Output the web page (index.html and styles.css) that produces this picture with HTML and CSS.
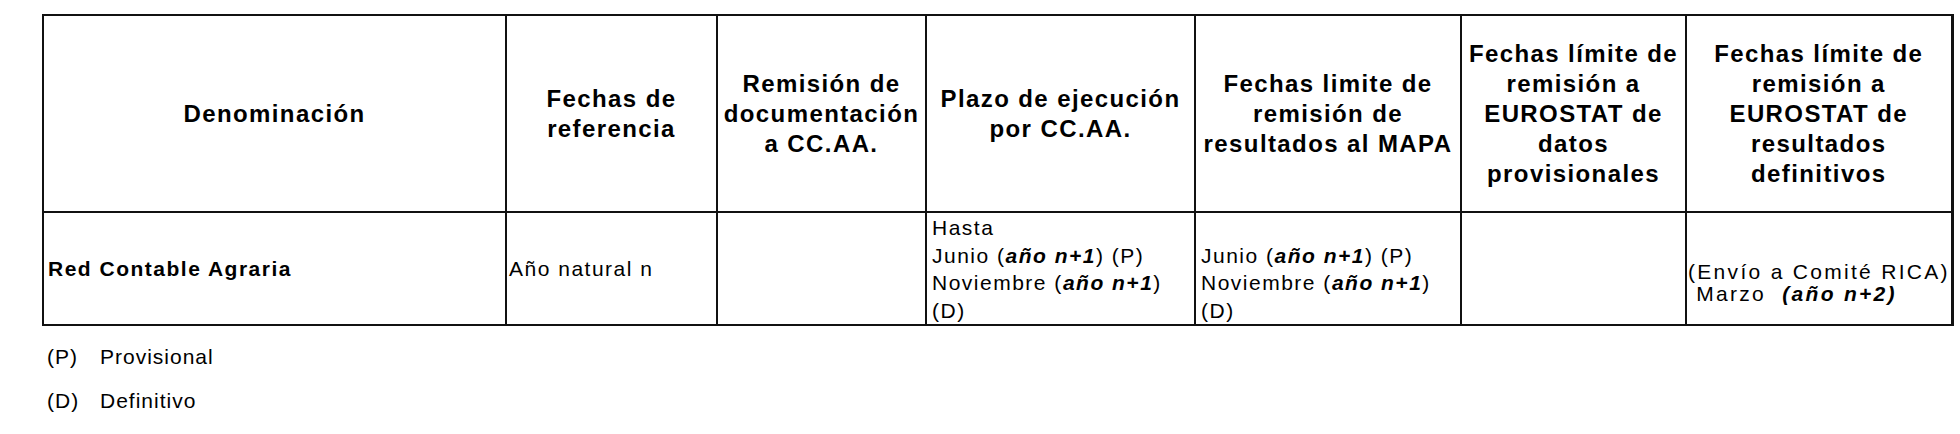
FILE: index.html
```html
<!DOCTYPE html>
<html lang="es">
<head>
<meta charset="utf-8">
<title>Red Contable Agraria</title>
<link rel="stylesheet" href="styles.css">
</head>
<body>
<table class="plan">
  <colgroup>
    <col class="c1"><col class="c2"><col class="c3"><col class="c4"><col class="c5"><col class="c6"><col class="c7">
  </colgroup>
  <thead>
    <tr class="head-row">
      <th>Denominación</th>
      <th>Fechas de<br>referencia</th>
      <th>Remisión de<br>documentación<br>a CC.AA.</th>
      <th>Plazo de ejecución<br>por CC.AA.</th>
      <th>Fechas limite de<br>remisión de<br>resultados al MAPA</th>
      <th>Fechas límite de<br>remisión a<br>EUROSTAT de<br>datos<br>provisionales</th>
      <th>Fechas límite de<br>remisión a<br>EUROSTAT de<br>resultados<br>definitivos</th>
    </tr>
  </thead>
  <tbody>
    <tr class="body-row">
      <td class="name">Red Contable Agraria</td>
      <td class="mid">Año natural n</td>
      <td class="mid"></td>
      <td class="bottom">Hasta<br>Junio (<b><i>año n+1</i></b>) (P)<br>Noviembre (<b><i>año n+1</i></b>)<br>(D)</td>
      <td class="bottom">Junio (<b><i>año n+1</i></b>) (P)<br>Noviembre (<b><i>año n+1</i></b>)<br>(D)</td>
      <td class="mid"></td>
      <td class="rica">(Envío a Comité RICA)<br>&nbsp;Marzo&nbsp; <b><i>(año n+2)</i></b></td>
    </tr>
  </tbody>
</table>
<div class="notes">
  <p class="note"><span class="key">(P)</span>Provisional</p>
  <p class="note"><span class="key">(D)</span>Definitivo</p>
</div>
</body>
</html>
```

FILE: styles.css
```css
html, body {
  margin: 0;
  padding: 0;
  background: #ffffff;
  color: #000000;
  font-family: "Liberation Sans", Arial, sans-serif;
}

.plan {
  margin: 14px 0 0 42px;
  border-collapse: collapse;
  table-layout: fixed;
  width: 1911px;
}

.c1 { width: 463px; }
.c2 { width: 211px; }
.c3 { width: 209px; }
.c4 { width: 269px; }
.c5 { width: 266px; }
.c6 { width: 225px; }
.c7 { width: 266px; }

.plan th,
.plan td {
  border: 2px solid #111111;
  padding: 0;
  white-space: nowrap;
  overflow: hidden;
}

.plan tr > :last-child {
  border-right-width: 3px;
}

.head-row {
  height: 197px;
}

.head-row th {
  font-size: 24px;
  line-height: 30px;
  font-weight: bold;
  letter-spacing: 1.4px;
  text-align: center;
  vertical-align: middle;
}

.body-row {
  height: 113px;
}

.body-row td {
  font-size: 21px;
  line-height: 27.5px;
  letter-spacing: 1.5px;
  text-align: left;
  padding-left: 4px;
}

.body-row b {
  font-weight: bold;
}

.body-row .name {
  font-weight: bold;
  letter-spacing: 1.5px;
  vertical-align: middle;
}

.body-row .mid {
  vertical-align: middle;
  padding-left: 2px;
}

.body-row .bottom {
  vertical-align: bottom;
  padding-left: 5px;
}

.body-row .rica {
  vertical-align: bottom;
  line-height: 22px;
  letter-spacing: 2.3px;
  padding-left: 1px;
  padding-bottom: 19px;
}

.notes {
  margin-top: 9px;
  padding-left: 47px;
}

.note {
  margin: 0;
  font-size: 21px;
  line-height: 44px;
  letter-spacing: 1px;
}

.key {
  display: inline-block;
  width: 53px;
}
```
